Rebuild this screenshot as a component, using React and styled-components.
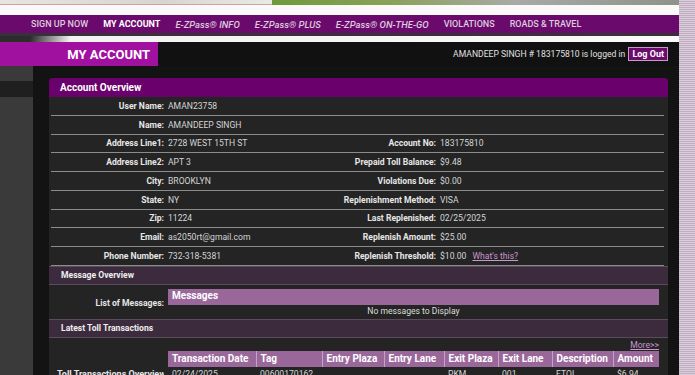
import React from "react";
import styled, { createGlobalStyle } from "styled-components";

const GlobalStyle = createGlobalStyle`
  html, body {
    margin: 0;
    padding: 0;
    background: #141414;
    font-family: Roboto, "Liberation Sans", sans-serif;
    overflow: hidden;
  }
  * { box-sizing: border-box; }
`;

const Page = styled.div`
  display: flex;
  width: 695px;
  height: 375px;
  overflow: hidden;
`;

const Main = styled.div`
  width: 679px;
  display: flex;
  flex-direction: column;
  background: #131313;
  & > * {
    flex-shrink: 0;
  }
`;

const Stripe = styled.div`
  width: 16px;
  background: repeating-linear-gradient(
    180deg,
    #dccddd 0px,
    #dccddd 1px,
    #bfaec0 1px,
    #bfaec0 2px
  );
`;

const Banner = styled.div`
  height: 15px;
  display: flex;
  flex-direction: column;
  background: #fbf9f9;
`;

const BannerImage = styled.div`
  height: 5px;
  display: flex;
  & > div:first-child {
    width: 272px;
    background: linear-gradient(90deg, #e9e4e2, #d9d4d1 60%, #ece8e6);
    border-bottom: 1px solid #c9a7a0;
  }
  & > div:last-child {
    flex: 1;
    background: linear-gradient(90deg, #6f9a3a, #8aa25a 30%, #a9aaa6 60%, #8c938a);
  }
`;

const NavBar = styled.nav`
  height: 18px;
  background: #6b0a6d;
  display: flex;
  align-items: center;
  gap: 15px;
  padding-left: 31px;
`;

const NavItem = styled.span`
  font-size: ${({ $italic }) => ($italic ? "9.5px" : "9px")};
  font-weight: ${({ $active }) => ($active ? 700 : 500)};
  font-style: ${({ $italic }) => ($italic ? "italic" : "normal")};
  color: ${({ $active }) => ($active ? "#ffffff" : "#dccbdc")};
  white-space: nowrap;
`;

const NavShadow = styled.div`
  height: 3px;
  background: #3a303a;
`;

const WhiteStrip = styled.div`
  height: 6px;
  background: linear-gradient(100deg, #2c2c2c 0px, #2c2c2c 30px, #f4f2f2 70px, #fafafa 100%);
`;

const TitleRow = styled.div`
  height: 24px;
  display: flex;
  align-items: center;
  justify-content: space-between;
  background: #111;
`;

const TitleTab = styled.div`
  width: 158px;
  height: 100%;
  background: #a1119f;
  color: #fff;
  font-weight: 700;
  font-size: 13px;
  display: flex;
  align-items: center;
  justify-content: flex-end;
  padding-right: 8px;
`;

const LoggedIn = styled.div`
  display: flex;
  align-items: center;
  gap: 3px;
  padding-right: 11px;
  font-size: 8.6px;
  color: #e0e0e0;
`;

const LogOut = styled.button`
  font-family: inherit;
  font-size: 9px;
  font-weight: 700;
  color: #fff;
  background: #6d0b6d;
  border: 1px solid #c79bc7;
  padding: 1px 3px;
  height: 14px;
  line-height: 10px;
`;

const Body = styled.div`
  flex: 1;
  display: flex;
  min-height: 0;
`;

const Sidebar = styled.div`
  width: 33px;
  background: #3a3a3a;
  padding-top: 15px;
  & > div {
    height: 16px;
    background: #1f1f1f;
  }
`;

const Content = styled.div`
  flex: 1;
  padding: 12px 11px 0 16px;
`;

const Panel = styled.section`
  background: #242424;
  border-radius: 4px 4px 0 0;
  overflow: hidden;
`;

const PanelHeader = styled.div`
  height: 19px;
  background: #6a006b;
  color: #fff;
  font-size: 10px;
  font-weight: 700;
  display: flex;
  align-items: center;
  padding-left: 11px;
`;

const InfoRow = styled.div`
  display: grid;
  grid-template-columns: 113px 160px 112px 1fr;
  height: 18.75px;
  align-items: center;
  margin: 0 4px 0 2px;
  border-bottom: 1px solid #8c8c8c;
  font-size: 8.6px;
  &:last-child {
    border-bottom: none;
  }
`;

const Label = styled.span`
  text-align: right;
  font-weight: 700;
  color: #e6e6e6;
  white-space: nowrap;
`;

const Value = styled.span`
  padding-left: 4px;
  color: #d4d4d4;
  white-space: nowrap;
`;

const HelpLink = styled.a`
  margin-left: 6px;
  color: #c996cf;
  text-decoration: underline;
`;

const SectionBar = styled.div`
  height: 19px;
  background: #3b2b3c;
  border-top: 1px solid #5b4b5c;
  border-bottom: 1px solid #5b4b5c;
  color: #eee;
  font-size: 8.6px;
  font-weight: 700;
  display: flex;
  align-items: center;
  padding-left: 12px;
`;

const MessageBlock = styled.div`
  display: grid;
  grid-template-columns: 115px 1fr;
  padding: 4px 9px 3px 0;
  gap: 4px;
`;

const MessageLabel = styled(Label)`
  font-size: 8.6px;
  align-self: center;
  padding-top: 2px;
`;

const MessageList = styled.div`
  display: flex;
  flex-direction: column;
`;

const PurpleBar = styled.div`
  height: 16px;
  background: #9a679b;
  color: #fff;
  font-size: 10px;
  font-weight: 700;
  padding: 1px 4px;
`;

const Empty = styled.div`
  text-align: center;
  font-size: 8.6px;
  color: #ddd;
  padding-top: 1px;
`;

const TransBlock = styled.div`
  display: grid;
  grid-template-columns: 115px 1fr;
  padding: 2px 9px 0 0;
  column-gap: 4px;
`;

const More = styled.div`
  grid-column: 2;
  text-align: right;
  font-size: 8.6px;
  line-height: 11px;
  color: #c996cf;
  text-decoration: underline;
  height: 11px;
`;

const TransLabel = styled(Label)`
  grid-column: 1;
  font-size: 9px;
  padding-top: 18px;
  overflow: hidden;
  text-align: left;
  padding-left: 8px;
`;

const Table = styled.table`
  border-collapse: collapse;
  width: 100%;
  font-size: 10px;
  & th {
    background: #9a679b;
    color: #fff;
    font-weight: 700;
    text-align: left;
    padding: 1px 4px;
    height: 16px;
    border-left: 1px solid #c4a4c5;
    white-space: nowrap;
  }
  & th:first-child {
    border-left: none;
  }
  & td {
    color: #d4d4d4;
    padding: 2px 4px;
    font-size: 8.6px;
  }
`;

const nav = [
  { t: "SIGN UP NOW" },
  { t: "MY ACCOUNT", active: true },
  { t: "E-ZPass® INFO", italic: true },
  { t: "E-ZPass® PLUS", italic: true },
  { t: "E-ZPass® ON-THE-GO", italic: true },
  { t: "VIOLATIONS" },
  { t: "ROADS & TRAVEL" },
];

const rows = [
  ["User Name:", "AMAN23758", "", ""],
  ["Name:", "AMANDEEP SINGH", "", ""],
  ["Address Line1:", "2728 WEST 15TH ST", "Account No:", "183175810"],
  ["Address Line2:", "APT 3", "Prepaid Toll Balance:", "$9.48"],
  ["City:", "BROOKLYN", "Violations Due:", "$0.00"],
  ["State:", "NY", "Replenishment Method:", "VISA"],
  ["Zip:", "11224", "Last Replenished:", "02/25/2025"],
  ["Email:", "as2050rt@gmail.com", "Replenish Amount:", "$25.00"],
  ["Phone Number:", "732-318-5381", "Replenish Threshold:", "$10.00"],
];

const cols = [
  ["Transaction Date", "88px"],
  ["Tag", "66px"],
  ["Entry Plaza", "62px"],
  ["Entry Lane", "60px"],
  ["Exit Plaza", "54px"],
  ["Exit Lane", "54px"],
  ["Description", "61px"],
  ["Amount", "auto"],
];

const first = ["02/24/2025", "00600170162", "", "", "PKM", "001", "ETOL", "$6.94"];

export default function App() {
  return (
    <Page>
      <GlobalStyle />
      <Main>
        <Banner>
          <BannerImage>
            <div />
            <div />
          </BannerImage>
        </Banner>
        <NavBar>
          {nav.map((n) => (
            <NavItem key={n.t} $active={n.active} $italic={n.italic}>
              {n.t}
            </NavItem>
          ))}
        </NavBar>
        <NavShadow />
        <WhiteStrip />
        <TitleRow>
          <TitleTab>MY ACCOUNT</TitleTab>
          <LoggedIn>
            AMANDEEP SINGH # 183175810 is logged in
            <LogOut>Log Out</LogOut>
          </LoggedIn>
        </TitleRow>
        <Body>
          <Sidebar>
            <div />
          </Sidebar>
          <Content>
            <Panel>
              <PanelHeader>Account Overview</PanelHeader>
              {rows.map((r, i) => (
                <InfoRow key={r[0]}>
                  <Label>{r[0]}</Label>
                  <Value>{r[1]}</Value>
                  <Label>{r[2]}</Label>
                  <Value>
                    {r[3]}
                    {i === rows.length - 1 && <HelpLink>What's this?</HelpLink>}
                  </Value>
                </InfoRow>
              ))}
              <SectionBar>Message Overview</SectionBar>
              <MessageBlock>
                <MessageLabel>List of Messages:</MessageLabel>
                <MessageList>
                  <PurpleBar>Messages</PurpleBar>
                  <Empty>No messages to Display</Empty>
                </MessageList>
              </MessageBlock>
              <SectionBar>Latest Toll Transactions</SectionBar>
              <TransBlock>
                <More>More&gt;&gt;</More>
                <TransLabel>Toll Transactions Overview:</TransLabel>
                <Table>
                  <thead>
                    <tr>
                      {cols.map(([c, w]) => (
                        <th key={c} style={{ width: w }}>
                          {c}
                        </th>
                      ))}
                    </tr>
                  </thead>
                  <tbody>
                    <tr>
                      {first.map((v, i) => (
                        <td key={i}>{v}</td>
                      ))}
                    </tr>
                  </tbody>
                </Table>
              </TransBlock>
            </Panel>
          </Content>
        </Body>
      </Main>
      <Stripe />
    </Page>
  );
}
